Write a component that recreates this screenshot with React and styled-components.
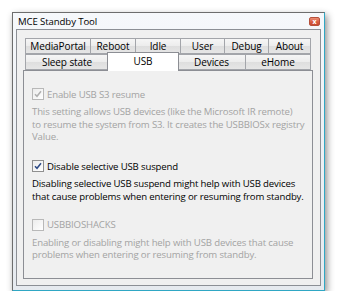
import * as React from 'react'
import styled, { createGlobalStyle } from 'styled-components'

const GlobalStyle = createGlobalStyle`
  body {
    margin: 0;
    background: #ffffff;
    font-family: "Open Sans", "Noto Sans", sans-serif;
  }
`

const Page = styled.div`
  padding: 12px 0 0 12px;
`

const Window = styled.div`
  width: 311px;
  height: 277px;
  display: flex;
  flex-direction: column;
  border: 1px solid #6d6d6d;
  border-right-color: #2fa7c4;
  border-bottom-color: #2fa7c4;
  background: linear-gradient(180deg, #f6f8fb 0%, #eef1f5 40%, #e6eaef 100%);
  box-shadow: 2px 3px 7px rgba(0, 0, 0, 0.45);
`

const TitleBar = styled.div`
  height: 16px;
  display: flex;
  align-items: center;
  justify-content: space-between;
  padding: 0 4px 0 5px;
  font-size: 9.6px;
  letter-spacing: -0.1px;
  color: #000000;
`

const CloseButton = styled.div`
  width: 9px;
  height: 7px;
  display: flex;
  align-items: center;
  justify-content: center;
  border: 1px solid #b5503a;
  border-radius: 2px;
  background: linear-gradient(180deg, #eb8d74 0%, #d75a3f 60%, #c9492f 100%);
  color: #ffffff;
  font-size: 7px;
  font-weight: bold;
  line-height: 1;
`

const Client = styled.div`
  flex: 1;
  margin: 0 3px 4px 3px;
  border: 1px solid #8c8f95;
  background: #f0f0f0;
  padding: 8px 7px 6px 6px;
  display: flex;
  flex-direction: column;
`

const TabRows = styled.div`
  display: flex;
  flex-direction: column;
  padding: 0 2px;
`

const TabRow = styled.div`
  display: flex;
  height: 16px;
`

const Tab = styled.div`
  width: ${(p) => p.$w}px;
  box-sizing: border-box;
  display: flex;
  align-items: center;
  justify-content: center;
  border: 1px solid #a3a5aa;
  margin-left: -1px;
  &:first-child {
    margin-left: 0;
  }
  background: linear-gradient(180deg, #f6f6f6 0%, #ececec 50%, #dedede 51%, #e6e6e6 100%);
  font-size: 10px;
  letter-spacing: -0.1px;
  color: #000000;
  position: relative;
`

const ActiveTab = styled(Tab)`
  background: #ffffff;
  border-color: #8c8e94;
  border-bottom: none;
  height: 19px;
  margin-top: -2px;
  margin-left: -2px;
  margin-right: -1px;
  width: ${(p) => p.$w + 2}px;
  z-index: 2;
  align-items: flex-start;
  padding-top: 1px;
`

const Panel = styled.div`
  flex: 1;
  border: 1px solid #8c8e94;
  background: #f0f0f0;
  padding: 16px 6px 0 8px;
  display: flex;
  flex-direction: column;
`

const Option = styled.label`
  display: flex;
  align-items: center;
  gap: 3px;
  height: 14px;
  font-size: 9.6px;
  letter-spacing: -0.15px;
  color: ${(p) => (p.$disabled ? '#a3a3a3' : '#000000')};
`

const Box = styled.span`
  width: 10px;
  height: 10px;
  display: flex;
  align-items: center;
  justify-content: center;
  border: 1px solid ${(p) => (p.$disabled ? '#b8b8b8' : '#8f8f8f')};
  background: linear-gradient(135deg, #ececec 0%, #ffffff 100%);
`

const Description = styled.p`
  margin: ${(p) => p.$top}px 0 ${(p) => p.$bottom}px 0;
  font-size: 9.6px;
  letter-spacing: -0.15px;
  line-height: 12.7px;
  white-space: nowrap;
  color: ${(p) => (p.$disabled ? '#a3a3a3' : '#000000')};
`

function Check({ checked, disabled }) {
  return (
    <Box $disabled={disabled}>
      {checked && (
        <svg width="8" height="8" viewBox="0 0 8 8">
          <path
            d="M1 4.2 L3 6.3 L7 1.2"
            fill="none"
            stroke={disabled ? '#b0b0b0' : '#2d4a86'}
            strokeWidth="1.5"
          />
        </svg>
      )}
    </Box>
  )
}

const topTabs = [
  ['MediaPortal', 66],
  ['Reboot', 46],
  ['Idle', 46],
  ['User', 45],
  ['Debug', 45],
  ['About', 43],
]

const bottomTabs = [
  ['Sleep state', 84],
  ['USB', 70],
  ['Devices', 69],
  ['eHome', 66],
]

export default function App() {
  return (
    <Page>
      <GlobalStyle />
      <Window>
        <TitleBar>
          <span>MCE Standby Tool</span>
          <CloseButton>x</CloseButton>
        </TitleBar>
        <Client>
          <TabRows>
            <TabRow>
              {topTabs.map(([name, w]) => (
                <Tab key={name} $w={w}>
                  {name}
                </Tab>
              ))}
            </TabRow>
            <TabRow>
              {bottomTabs.map(([name, w]) =>
                name === 'USB' ? (
                  <ActiveTab key={name} $w={w}>
                    {name}
                  </ActiveTab>
                ) : (
                  <Tab key={name} $w={w}>
                    {name}
                  </Tab>
                )
              )}
            </TabRow>
          </TabRows>
          <Panel>
            <Option $disabled>
              <Check checked disabled />
              Enable USB S3 resume
            </Option>
            <Description $disabled $top={5} $bottom={15}>
              This setting allows USB devices (like the Microsoft IR remote)
              <br />
              to resume the system from S3. It creates the USBBIOSx registry
              <br />
              Value.
            </Description>
            <Option>
              <Check checked />
              Disable selective USB suspend
            </Option>
            <Description $top={5} $bottom={14}>
              Disabling selective USB suspend might help with USB devices
              <br />
              that cause problems when entering or resuming from standby.
            </Description>
            <Option $disabled>
              <Check disabled />
              USBBIOSHACKS
            </Option>
            <Description $disabled $top={5} $bottom={0}>
              Enabling or disabling might help with USB devices that cause
              <br />
              problems when entering or resuming from standby.
            </Description>
          </Panel>
        </Client>
      </Window>
    </Page>
  )
}
